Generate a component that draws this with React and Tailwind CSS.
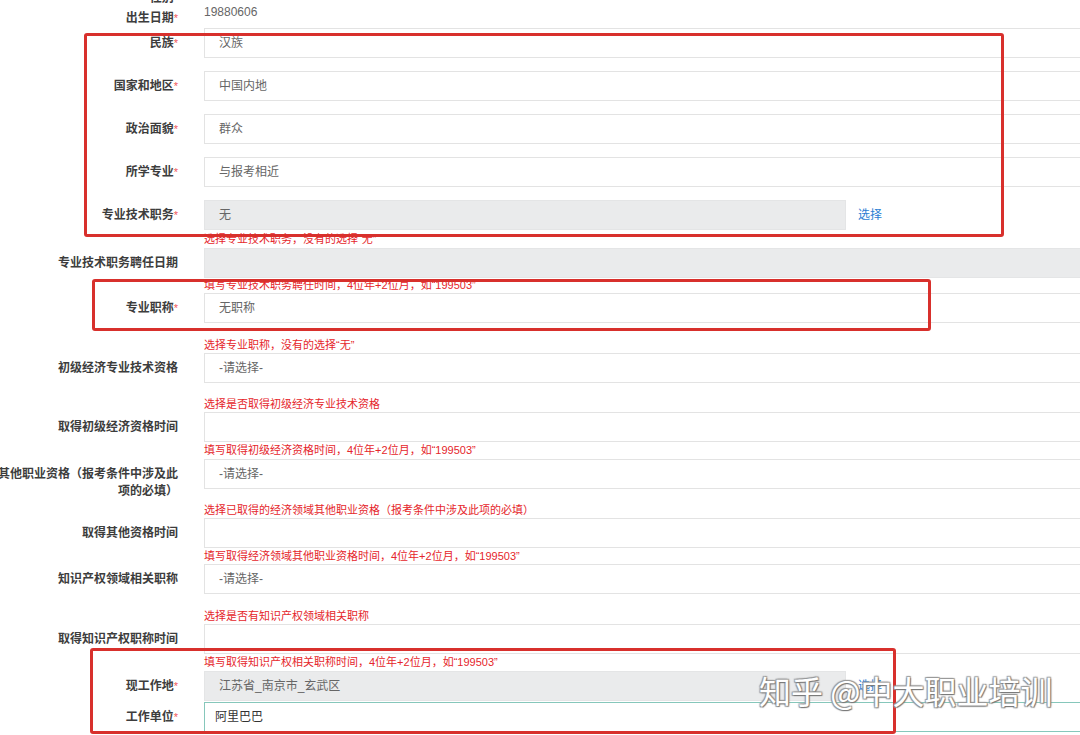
const font = "font-['Liberation_Sans','Noto_Sans_CJK_SC',sans-serif]";

const Label = ({ text, req }) => (
  <div className="text-right text-[12px] font-bold text-[#3d3d3d] leading-[30px] whitespace-nowrap">
    {text}
    {req && <span className="text-[11px] font-normal text-[#f05a5a]">*</span>}
  </div>
);

const Box = ({ value, gray, dark }) => (
  <div
    className={`h-[30px] border pl-[14px] text-[12px] leading-[28px] ${
      gray ? "bg-[#eaebec] border-[#e4e5e6]" : "bg-white border-[#e3e3e3]"
    } ${dark ? "text-[#333]" : "text-[#666]"}`}
  >
    {value}
  </div>
);

const Row = ({ label, req, value, gray, className = "" }) => (
  <div className={`grid grid-cols-[178px_1fr] gap-x-[26px] ${className}`}>
    <Label text={label} req={req} />
    <Box value={value} gray={gray} />
  </div>
);

const PickRow = ({ label, value, className = "" }) => (
  <div className={`grid grid-cols-[178px_1fr] gap-x-[26px] ${className}`}>
    <Label text={label} req />
    <div className="flex items-center">
      <div className="w-[642px]">
        <Box value={value} gray />
      </div>
      <span className="ml-[12px] text-[12px] text-[#2b7dd3]">选择</span>
    </div>
  </div>
);

const Hint = ({ children, className = "" }) => (
  <div className={`pl-[204px] text-[11px] text-[#e5262b] whitespace-nowrap ${className}`}>
    {children}
  </div>
);

export default function App() {
  return (
    <div className={`relative w-[1080px] h-[735px] overflow-hidden bg-white ${font}`}>
      <div className="w-[1110px]">
        {/* cut off row at the very top */}
        <div className="-mt-[10px] h-[16px] grid grid-cols-[178px_1fr] gap-x-[26px]">
          <div className="text-right text-[12px] font-bold text-[#3d3d3d] leading-[16px]">
            性别<span className="text-[11px] font-normal text-[#f05a5a]">*</span>
          </div>
        </div>
        <div className="h-[22px] grid grid-cols-[178px_1fr] gap-x-[26px] items-start">
          <div className="text-right text-[12px] font-bold text-[#3d3d3d] leading-[24px]">
            出生日期<span className="text-[11px] font-normal text-[#f05a5a]">*</span>
          </div>
          <div className="text-[12px] leading-[12px] text-[#666]">19880606</div>
        </div>

        <Row label="民族" req value="汉族" />
        <Row label="国家和地区" req value="中国内地" className="mt-[13px]" />
        <Row label="政治面貌" req value="群众" className="mt-[13px]" />
        <Row label="所学专业" req value="与报考相近" className="mt-[13px]" />
        <PickRow label="专业技术职务" value="无" className="mt-[13px]" />
        <Hint className="h-[18px] leading-[18px]">选择专业技术职务，没有的选择“无”</Hint>

        <Row label="专业技术职务聘任日期" gray />
        <Hint className="h-[15px] leading-[15px]">填写专业技术职务聘任时间，4位年+2位月，如“199503”</Hint>

        <Row label="专业职称" req value="无职称" />
        <Hint className="mt-[14px] h-[16px] leading-[16px]">选择专业职称，没有的选择“无”</Hint>

        <Row label="初级经济专业技术资格" value="-请选择-" />
        <Hint className="mt-[13px] h-[16px] leading-[16px]">选择是否取得初级经济专业技术资格</Hint>

        <Row label="取得初级经济资格时间" />
        <Hint className="h-[17px] leading-[17px]">填写取得初级经济资格时间，4位年+2位月，如“199503”</Hint>

        <div className="grid grid-cols-[178px_1fr] gap-x-[26px] items-start">
          <div className="-ml-[8px] pt-[7px] text-right text-[12px] font-bold text-[#3d3d3d] leading-[17px]">
            其他职业资格（报考条件中涉及此项的必填）
          </div>
          <Box value="-请选择-" />
        </div>
        <Hint className="mt-[2px] h-[16px] leading-[16px]">
          选择已取得的经济领域其他职业资格（报考条件中涉及此项的必填）
        </Hint>

        <Row label="取得其他资格时间" />
        <Hint className="h-[16px] leading-[16px]">
          填写取得经济领域其他职业资格时间，4位年+2位月，如“199503”
        </Hint>

        <Row label="知识产权领域相关职称" value="-请选择-" />
        <Hint className="mt-[14px] h-[16px] leading-[16px]">选择是否有知识产权领域相关职称</Hint>

        <Row label="取得知识产权职称时间" />
        <Hint className="h-[17px] leading-[17px]">填写取得知识产权相关职称时间，4位年+2位月，如“199503”</Hint>

        <PickRow label="现工作地" value="江苏省_南京市_玄武区" />
        <div className="mt-[1px] grid grid-cols-[178px_1fr] gap-x-[26px]">
          <Label text="工作单位" req />
          <div className="h-[30px] border border-[#86c7bb] bg-white pl-[10px] text-[12px] leading-[28px] text-[#333]">
            阿里巴巴
          </div>
        </div>
        <Hint className="h-[16px] leading-[20px]">填写工作单位全称，与单位公章一致</Hint>
      </div>

      {/* red annotation frames */}
      <div className="absolute left-[84px] top-[33px] w-[920px] h-[204px] border-[3px] border-[#d8302c] rounded-[3px]" />
      <div className="absolute left-[92px] top-[279px] w-[839px] h-[52px] border-[3px] border-[#d8302c] rounded-[3px]" />
      <div className="absolute left-[90px] top-[648px] w-[806px] h-[86px] border-[3px] border-[#d8302c] rounded-[3px]" />

      {/* watermark */}
      <div className="absolute left-[759px] top-[669px] text-[32px] leading-[42px] text-white whitespace-nowrap font-['Noto_Sans_CJK_SC',sans-serif] [text-shadow:1px_1px_1px_#777,-1px_-1px_1px_#999,1px_-1px_1px_#999,-1px_1px_1px_#999]">
        知乎 @中大职业培训
      </div>
    </div>
  );
}
